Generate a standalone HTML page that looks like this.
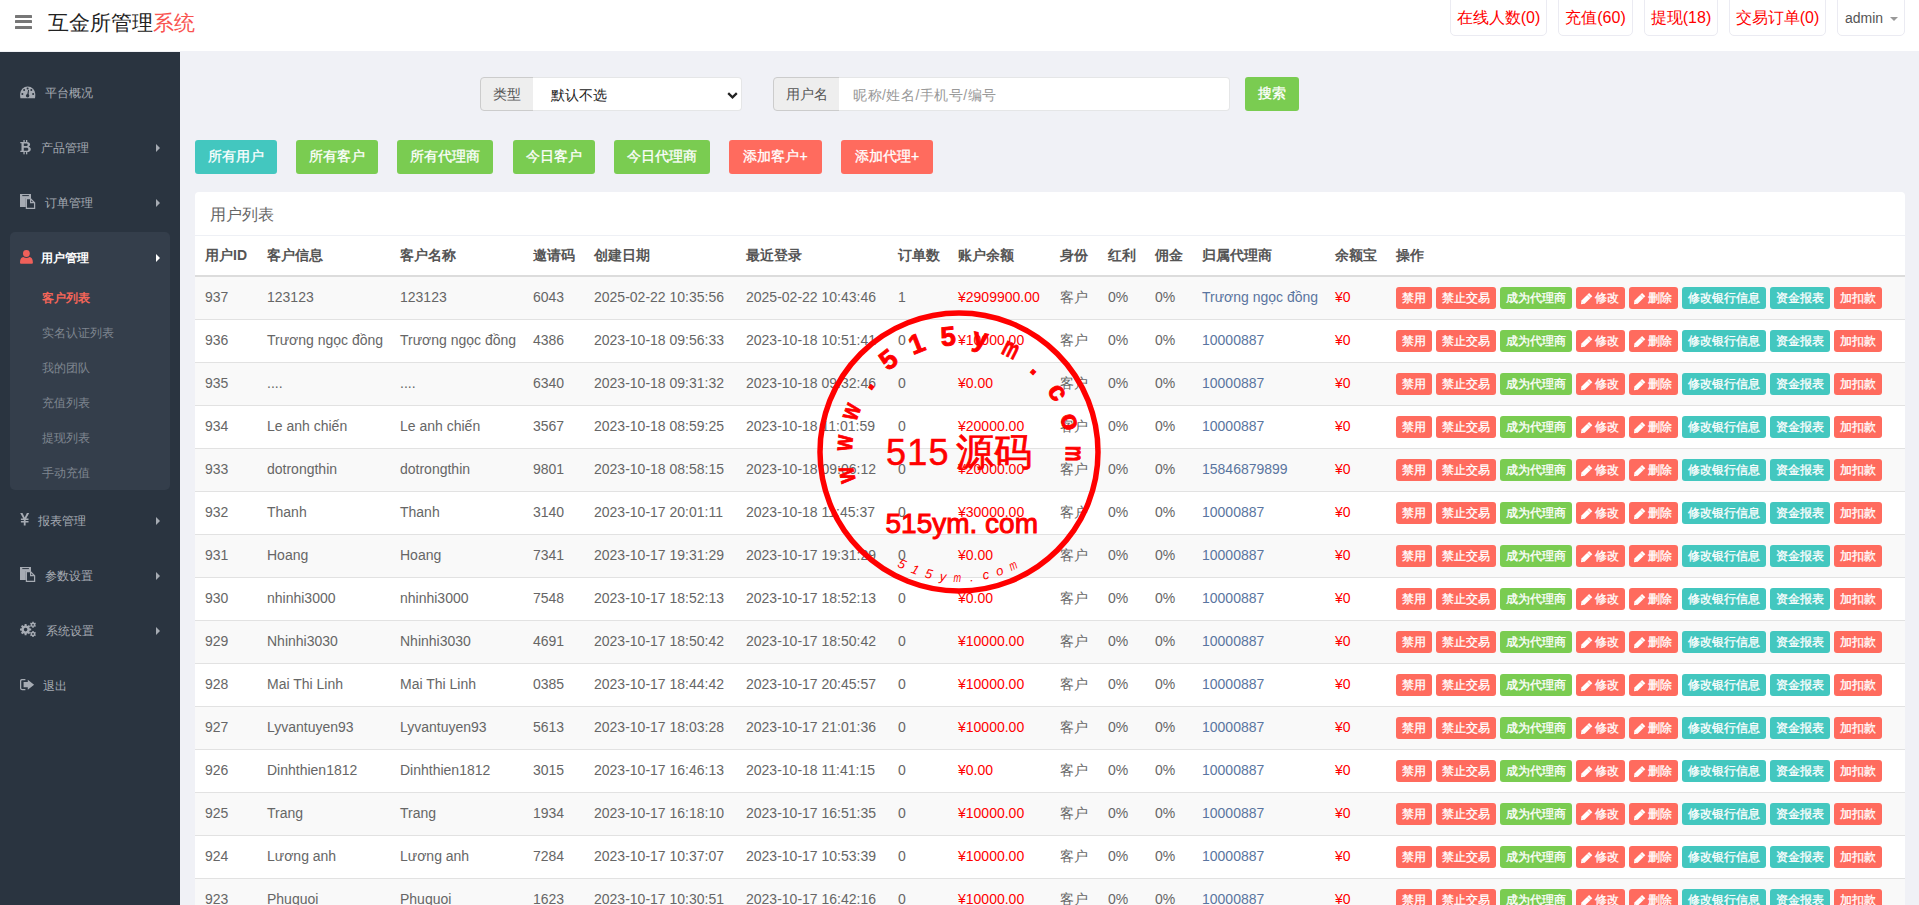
<!DOCTYPE html><html><head><meta charset="utf-8"><style>*{box-sizing:border-box;margin:0;padding:0}
html,body{width:1919px;height:905px;overflow:hidden;background:#f0f1f6;font-family:"Liberation Sans",sans-serif;font-size:14px;color:#666}
#hdr{position:absolute;left:0;top:0;width:1919px;height:51px;background:#fff}
.hb{position:absolute;left:15px;top:0;width:17px;height:40px}
.hb i{position:absolute;left:0;width:17px;height:2.7px;background:#777;border-radius:0.6px}
.hb i:nth-child(1){top:15.1px}.hb i:nth-child(2){top:20.2px}.hb i:nth-child(3){top:26.1px}
.logo{position:absolute;left:48px;top:9px;font-size:21px;line-height:28px;color:#222;white-space:nowrap}
.logo span{color:#f95350}
.hi{position:absolute;top:-5px;height:41px;border:1px solid #ebebf2;border-radius:5px;background:#fff;color:#ff0000;font-size:16px;line-height:44px;text-align:center;white-space:nowrap}
.hi.adm{color:#555;font-size:14px;text-align:left;padding-left:7px}
.caret{position:absolute;left:52px;top:21px;width:0;height:0;border-left:4.5px solid transparent;border-right:4.5px solid transparent;border-top:4.5px solid #999}
#content{position:absolute;left:180px;top:51px;width:1739px;height:854px;background:#f0f1f6}
#side{position:absolute;left:0;top:52px;width:180px;height:853px;background:#2a3440}
.mi{position:absolute;left:0;width:180px;height:20px;line-height:20px;font-size:12px;color:#a6abb3;white-space:nowrap}
.mi .ic{position:absolute;top:2px}
.mi .tx{position:absolute;top:0}
.mi .ar{position:absolute;left:156px;top:6px;width:0;height:0;border-top:4px solid transparent;border-bottom:4px solid transparent;border-left:4px solid #a6abb3}
#sub{position:absolute;left:10px;top:180px;width:160px;height:258px;background:#343e4b;border-radius:5px}
.si{position:absolute;left:42px;font-size:12px;line-height:20px;color:#7f8690;white-space:nowrap}
.lab{position:absolute;top:77px;height:34px;background:#eee;border:1px solid #ccc;border-radius:4px 0 0 4px;color:#555;text-align:center;line-height:32px;font-size:14px}
.sel{position:absolute;top:77px;height:34px;background:#fff;border:1px solid #e5e6e7;border-left:none;border-radius:0 4px 4px 0;color:#222;line-height:34px;padding-left:18px;font-size:14px}
.chev{position:absolute;right:3px;top:13.5px}
.inp{position:absolute;top:77px;height:34px;background:#fff;border:1px solid #e5e6e7;border-left:none;border-radius:0 4px 4px 0;color:#999;line-height:34px;padding-left:14px;letter-spacing:0.5px;font-size:14px}
.btn{position:absolute;border-radius:3px;color:#fff;text-align:center;line-height:33px;font-size:14px;white-space:nowrap;-webkit-text-stroke:0.3px #fff}
.g{background:#7acc51}
.t{background:#43c7bf}
.r{background:#ff6b5e}
#panel{position:absolute;left:195px;top:192px;width:1710px;height:720px;background:#fff;border-radius:4px}
.ptitle{position:absolute;left:15px;top:11.5px;font-size:16px;line-height:22px;color:#666}
#panel:after{content:"";position:absolute;left:0;top:43px;width:100%;height:1px;background:#eef0f5}
#tbl{position:absolute;left:195px;top:235px;width:1710px;height:700px}
.thead{position:absolute;left:0;top:1px;width:100%;height:41px;border-bottom:2px solid #dcdcdc}
.th{position:absolute;top:9px;font-weight:bold;color:#555;font-size:14px;line-height:20px;white-space:nowrap}
.tr{position:absolute;left:0;width:100%;height:43px;border-bottom:1px solid #e2e2e2;background:#fff}
.tr.odd{background:#f9f9f9}
.td{position:absolute;top:10px;line-height:20px;font-size:14px;color:#666;white-space:nowrap}
.td.red{color:#ff0000}
.td.blue{color:#5a75a0}
.ops{position:absolute;top:10px;height:22px;white-space:nowrap;font-size:0}
.b{display:inline-block;height:22px;line-height:22px;font-size:12px;-webkit-text-stroke:0.3px #fff;color:#fff;border-radius:3px;text-align:center;margin-right:4px;vertical-align:top}
.b.pb{position:relative;text-align:left;padding-left:19px}
.pen{position:absolute;left:5px;top:6px}
#stamp{position:absolute;left:809px;top:302px}
</style></head><body>
<div id="hdr">
<div class="hb"><i></i><i></i><i></i></div>
<div class="logo">互金所管理<span>系统</span></div>
<div class="hi" style="left:1450px;width:97px">在线人数(0)</div>
<div class="hi" style="left:1558px;width:75px">充值(60)</div>
<div class="hi" style="left:1644px;width:74px">提现(18)</div>
<div class="hi" style="left:1729px;width:97px">交易订单(0)</div>
<div class="hi adm" style="left:1837px;width:68px">admin<b class="caret"></b></div>
</div>
<div id="content"></div>
<div id="side">
<div id="sub"></div>
<svg style="position:absolute;left:19.8px;top:33.8px" width="16" height="13" viewBox="0 0 16 13"><path d="M0.1 8A7.6 7.6 0 0 1 15.3 8C15.3 9.5 15.2 11 15 12.2H0.4C0.2 11 0.1 9.5 0.1 8Z" fill="#a6abb3"/><g fill="#2a3440"><circle cx="2.4" cy="8" r="1"/><circle cx="4.1" cy="4.1" r="1"/><circle cx="7.6" cy="2.4" r="1"/><circle cx="11.3" cy="4.1" r="1"/><circle cx="13.1" cy="8" r="1"/><circle cx="7.6" cy="9.8" r="1.7"/><path d="M7 9.5L8.1 3.8 9 3.9 8.5 9.8Z"/></g></svg><svg style="position:absolute;left:20px;top:88px" width="12" height="15" viewBox="0 0 12 15"><path fill-rule="evenodd" d="M0.3 2h6.4c2.2 0 3.4 1 3.4 2.6 0 1-.6 1.8-1.5 2.1 1.3.3 2.2 1.2 2.2 2.5 0 1.9-1.4 2.8-3.7 2.8H0.3v-1.2h1.2V3.2H0.3z M3.8 3.6v2.5h2.4c.9 0 1.5-.5 1.5-1.25S7.1 3.6 6.2 3.6z M3.8 7.7v3h2.8c1 0 1.7-.5 1.7-1.5S7.6 7.7 6.6 7.7z" fill="#a6abb3"/><rect x="3.4" y="0" width="1.3" height="2.2" fill="#a6abb3"/><rect x="6" y="0" width="1.3" height="2.2" fill="#a6abb3"/><rect x="3.4" y="12" width="1.3" height="2.3" fill="#a6abb3"/><rect x="6" y="12" width="1.3" height="2.3" fill="#a6abb3"/></svg><svg style="position:absolute;left:20px;top:142px" width="16" height="16" viewBox="0 0 16 16"><path d="M0 0h11v13H0z" fill="#a6abb3"/><path d="M2.3 1.6h6.6" stroke="#2a3440" stroke-width="1"/><path d="M5.8 4h4.8l4.6 4.6V15H5.8z" fill="#2a3440"/><path d="M6.4 4.6h4l4.2 4.2v5.6H6.4z" fill="none" stroke="#a6abb3" stroke-width="1.25"/><path d="M10.6 4.8v3.8h3.8" fill="none" stroke="#a6abb3" stroke-width="1.2"/></svg><svg style="position:absolute;left:20px;top:197.5px" width="13" height="14" viewBox="0 0 13 14"><circle cx="6.4" cy="3.5" r="3.4" fill="#f0605a"/><path d="M0 12.4c0-3.2 1.4-5 3.3-5.3 1.9 1.3 4.3 1.3 6.3 0 1.9.3 3.3 2.1 3.3 5.3 0 .9-.5 1.4-1.3 1.4H1.3C.5 13.8 0 13.3 0 12.4z" fill="#f0605a"/></svg><svg style="position:absolute;left:20px;top:461px" width="10" height="13" viewBox="0 0 10 13"><path d="M0.2 0h2.3L4.7 4.6 6.9 0h2.3L6.2 5.6h2.3v1.3H5.6v1.2h2.9v1.3H5.6V12.5H3.8V9.4H0.9V8.1h2.9V6.9H0.9V5.6h2.3z" fill="#a6abb3"/></svg><svg style="position:absolute;left:20px;top:515px" width="16" height="16" viewBox="0 0 16 16"><path d="M0 0h11v13H0z" fill="#a6abb3"/><path d="M2.3 1.6h6.6" stroke="#2a3440" stroke-width="1"/><path d="M5.8 4h4.8l4.6 4.6V15H5.8z" fill="#2a3440"/><path d="M6.4 4.6h4l4.2 4.2v5.6H6.4z" fill="none" stroke="#a6abb3" stroke-width="1.25"/><path d="M10.6 4.8v3.8h3.8" fill="none" stroke="#a6abb3" stroke-width="1.2"/></svg><svg style="position:absolute;left:20px;top:568px" width="17" height="18" viewBox="0 0 17 18"><path fill-rule="evenodd" d="M4.58 5.42 L4.60 3.99 L6.60 3.99 L6.62 5.42 L7.83 5.92 L8.86 4.92 L10.28 6.34 L9.28 7.37 L9.78 8.58 L11.21 8.60 L11.21 10.60 L9.78 10.62 L9.28 11.83 L10.28 12.86 L8.86 14.28 L7.83 13.28 L6.62 13.78 L6.60 15.21 L4.60 15.21 L4.58 13.78 L3.37 13.28 L2.34 14.28 L0.92 12.86 L1.92 11.83 L1.42 10.62 L-0.01 10.60 L-0.01 8.60 L1.42 8.58 L1.92 7.37 L0.92 6.34 L2.34 4.92 L3.37 5.92Z M3.80 9.60 a1.8 1.8 0 1 0 3.60 0 a1.8 1.8 0 1 0 -3.60 0Z M12.25 2.73 L12.20 1.81 L13.80 1.81 L13.75 2.73 L14.42 3.12 L15.19 2.61 L15.99 4.00 L15.17 4.41 L15.17 5.19 L15.99 5.60 L15.19 6.99 L14.42 6.48 L13.75 6.87 L13.80 7.79 L12.20 7.79 L12.25 6.87 L11.58 6.48 L10.81 6.99 L10.01 5.60 L10.83 5.19 L10.83 4.41 L10.01 4.00 L10.81 2.61 L11.58 3.12Z M12.10 4.80 a0.9 0.9 0 1 0 1.80 0 a0.9 0.9 0 1 0 -1.80 0Z M12.25 11.93 L12.20 11.01 L13.80 11.01 L13.75 11.93 L14.42 12.32 L15.19 11.81 L15.99 13.20 L15.17 13.61 L15.17 14.39 L15.99 14.80 L15.19 16.19 L14.42 15.68 L13.75 16.07 L13.80 16.99 L12.20 16.99 L12.25 16.07 L11.58 15.68 L10.81 16.19 L10.01 14.80 L10.83 14.39 L10.83 13.61 L10.01 13.20 L10.81 11.81 L11.58 12.32Z M12.10 14.00 a0.9 0.9 0 1 0 1.80 0 a0.9 0.9 0 1 0 -1.80 0Z" fill="#a6abb3"/></svg><svg style="position:absolute;left:19.6px;top:626.6px" width="15" height="12" viewBox="0 0 15 12"><path d="M5.4 0.6H2.2C1.2 0.6 0.6 1.2 0.6 2.2v6.8c0 1 .6 1.6 1.6 1.6h3.2" fill="none" stroke="#a6abb3" stroke-width="1.3"/><path d="M3.6 3.1h4.2V0.7l6.3 5-6.3 5V8.3H3.6z" fill="#a6abb3"/></svg>
<div class="mi" style="top:30.700000000000003px"><span class="tx" style="left:44.6px">平台概况</span></div>
<div class="mi" style="top:85.5px"><span class="tx" style="left:40.7px">产品管理</span><i class="ar"></i></div>
<div class="mi" style="top:140.5px"><span class="tx" style="left:44.6px">订单管理</span><i class="ar"></i></div>
<div class="mi" style="top:195.6px;color:#fff;font-weight:bold"><span class="tx" style="left:41.2px">用户管理</span><i class="ar" style="border-left-color:#fff"></i></div>
<div class="si" style="top:235.5px;color:#f46558;font-weight:bold">客户列表</div>
<div class="si" style="top:270.5px">实名认证列表</div>
<div class="si" style="top:305.5px">我的团队</div>
<div class="si" style="top:340.5px">充值列表</div>
<div class="si" style="top:375.5px">提现列表</div>
<div class="si" style="top:410.5px">手动充值</div>
<div class="mi" style="top:458.5px"><span class="tx" style="left:38.1px">报表管理</span><i class="ar"></i></div>
<div class="mi" style="top:513.6px"><span class="tx" style="left:44.6px">参数设置</span><i class="ar"></i></div>
<div class="mi" style="top:569px"><span class="tx" style="left:46.3px">系统设置</span><i class="ar"></i></div>
<div class="mi" style="top:624px"><span class="tx" style="left:43.3px">退出</span></div>
</div>
<div class="lab" style="left:480px;width:54px">类型</div>
<div class="sel" style="left:533px;width:209px">默认不选<svg class="chev" width="11" height="7" viewBox="0 0 11 7"><path d="M1.2 1.2L5.5 5.3 9.8 1.2" stroke="#222" stroke-width="2.3" fill="none"/></svg></div>
<div class="lab" style="left:773px;width:67px">用户名</div>
<div class="inp" style="left:839px;width:391px">昵称/姓名/手机号/编号</div>
<div class="btn g" style="left:1245px;top:77px;width:54px;height:34px">搜索</div>

<div class="btn t" style="left:195px;top:140px;width:82px;height:34px">所有用户</div>
<div class="btn g" style="left:296px;top:140px;width:82px;height:34px">所有客户</div>
<div class="btn g" style="left:397px;top:140px;width:96px;height:34px">所有代理商</div>
<div class="btn g" style="left:513px;top:140px;width:82px;height:34px">今日客户</div>
<div class="btn g" style="left:614px;top:140px;width:96px;height:34px">今日代理商</div>
<div class="btn r" style="left:729px;top:140px;width:93px;height:34px">添加客户+</div>
<div class="btn r" style="left:841px;top:140px;width:92px;height:34px">添加代理+</div>
<div id="panel"><div class="ptitle">用户列表</div></div>
<div id="tbl">
<div class="thead">
<span class="th" style="left:10px">用户ID</span>
<span class="th" style="left:72px">客户信息</span>
<span class="th" style="left:205px">客户名称</span>
<span class="th" style="left:338px">邀请码</span>
<span class="th" style="left:399px">创建日期</span>
<span class="th" style="left:551px">最近登录</span>
<span class="th" style="left:703px">订单数</span>
<span class="th" style="left:763px">账户余额</span>
<span class="th" style="left:865px">身份</span>
<span class="th" style="left:913px">红利</span>
<span class="th" style="left:960px">佣金</span>
<span class="th" style="left:1007px">归属代理商</span>
<span class="th" style="left:1140px">余额宝</span>
<span class="th" style="left:1201px">操作</span>
</div>
<div class="tr odd" style="top:42px">
<span class="td" style="left:10px">937</span>
<span class="td" style="left:72px">123123</span>
<span class="td" style="left:205px">123123</span>
<span class="td" style="left:338px">6043</span>
<span class="td" style="left:399px">2025-02-22 10:35:56</span>
<span class="td" style="left:551px">2025-02-22 10:43:46</span>
<span class="td" style="left:703px">1</span>
<span class="td red" style="left:763px">¥2909900.00</span>
<span class="td" style="left:865px">客户</span>
<span class="td" style="left:913px">0%</span>
<span class="td" style="left:960px">0%</span>
<span class="td blue" style="left:1007px">Trương ngọc đồng</span>
<span class="td red" style="left:1140px">¥0</span>
<span class="ops" style="left:1201px"><span class="b r" style="width:36px">禁用</span><span class="b r" style="width:60px">禁止交易</span><span class="b g" style="width:72px">成为代理商</span><span class="b r pb" style="width:49px"><svg class="pen" width="12" height="12" viewBox="0 0 12 12"><path d="M0 11.3L0.45 7.6 8.1 0 11.3 3.2 3.7 10.85Z" fill="#fff"/><path d="M6.3 1.75L9.55 5" stroke="#ff6b5e" stroke-width="0.45"/><path d="M0.35 8.4L2.9 10.95" stroke="#ffd0c8" stroke-width="0.5"/></svg>修改</span><span class="b r pb" style="width:49px"><svg class="pen" width="12" height="12" viewBox="0 0 12 12"><path d="M0 11.3L0.45 7.6 8.1 0 11.3 3.2 3.7 10.85Z" fill="#fff"/><path d="M6.3 1.75L9.55 5" stroke="#ff6b5e" stroke-width="0.45"/><path d="M0.35 8.4L2.9 10.95" stroke="#ffd0c8" stroke-width="0.5"/></svg>删除</span><span class="b t" style="width:84px">修改银行信息</span><span class="b t" style="width:60px">资金报表</span><span class="b r" style="width:48px">加扣款</span></span>
</div>
<div class="tr" style="top:85px">
<span class="td" style="left:10px">936</span>
<span class="td" style="left:72px">Trương ngọc đồng</span>
<span class="td" style="left:205px">Trương ngọc đồng</span>
<span class="td" style="left:338px">4386</span>
<span class="td" style="left:399px">2023-10-18 09:56:33</span>
<span class="td" style="left:551px">2023-10-18 10:51:41</span>
<span class="td" style="left:703px">0</span>
<span class="td red" style="left:763px">¥10000.00</span>
<span class="td" style="left:865px">客户</span>
<span class="td" style="left:913px">0%</span>
<span class="td" style="left:960px">0%</span>
<span class="td blue" style="left:1007px">10000887</span>
<span class="td red" style="left:1140px">¥0</span>
<span class="ops" style="left:1201px"><span class="b r" style="width:36px">禁用</span><span class="b r" style="width:60px">禁止交易</span><span class="b g" style="width:72px">成为代理商</span><span class="b r pb" style="width:49px"><svg class="pen" width="12" height="12" viewBox="0 0 12 12"><path d="M0 11.3L0.45 7.6 8.1 0 11.3 3.2 3.7 10.85Z" fill="#fff"/><path d="M6.3 1.75L9.55 5" stroke="#ff6b5e" stroke-width="0.45"/><path d="M0.35 8.4L2.9 10.95" stroke="#ffd0c8" stroke-width="0.5"/></svg>修改</span><span class="b r pb" style="width:49px"><svg class="pen" width="12" height="12" viewBox="0 0 12 12"><path d="M0 11.3L0.45 7.6 8.1 0 11.3 3.2 3.7 10.85Z" fill="#fff"/><path d="M6.3 1.75L9.55 5" stroke="#ff6b5e" stroke-width="0.45"/><path d="M0.35 8.4L2.9 10.95" stroke="#ffd0c8" stroke-width="0.5"/></svg>删除</span><span class="b t" style="width:84px">修改银行信息</span><span class="b t" style="width:60px">资金报表</span><span class="b r" style="width:48px">加扣款</span></span>
</div>
<div class="tr odd" style="top:128px">
<span class="td" style="left:10px">935</span>
<span class="td" style="left:72px">....</span>
<span class="td" style="left:205px">....</span>
<span class="td" style="left:338px">6340</span>
<span class="td" style="left:399px">2023-10-18 09:31:32</span>
<span class="td" style="left:551px">2023-10-18 09:32:46</span>
<span class="td" style="left:703px">0</span>
<span class="td red" style="left:763px">¥0.00</span>
<span class="td" style="left:865px">客户</span>
<span class="td" style="left:913px">0%</span>
<span class="td" style="left:960px">0%</span>
<span class="td blue" style="left:1007px">10000887</span>
<span class="td red" style="left:1140px">¥0</span>
<span class="ops" style="left:1201px"><span class="b r" style="width:36px">禁用</span><span class="b r" style="width:60px">禁止交易</span><span class="b g" style="width:72px">成为代理商</span><span class="b r pb" style="width:49px"><svg class="pen" width="12" height="12" viewBox="0 0 12 12"><path d="M0 11.3L0.45 7.6 8.1 0 11.3 3.2 3.7 10.85Z" fill="#fff"/><path d="M6.3 1.75L9.55 5" stroke="#ff6b5e" stroke-width="0.45"/><path d="M0.35 8.4L2.9 10.95" stroke="#ffd0c8" stroke-width="0.5"/></svg>修改</span><span class="b r pb" style="width:49px"><svg class="pen" width="12" height="12" viewBox="0 0 12 12"><path d="M0 11.3L0.45 7.6 8.1 0 11.3 3.2 3.7 10.85Z" fill="#fff"/><path d="M6.3 1.75L9.55 5" stroke="#ff6b5e" stroke-width="0.45"/><path d="M0.35 8.4L2.9 10.95" stroke="#ffd0c8" stroke-width="0.5"/></svg>删除</span><span class="b t" style="width:84px">修改银行信息</span><span class="b t" style="width:60px">资金报表</span><span class="b r" style="width:48px">加扣款</span></span>
</div>
<div class="tr" style="top:171px">
<span class="td" style="left:10px">934</span>
<span class="td" style="left:72px">Le anh chiến</span>
<span class="td" style="left:205px">Le anh chiến</span>
<span class="td" style="left:338px">3567</span>
<span class="td" style="left:399px">2023-10-18 08:59:25</span>
<span class="td" style="left:551px">2023-10-18 11:01:59</span>
<span class="td" style="left:703px">0</span>
<span class="td red" style="left:763px">¥20000.00</span>
<span class="td" style="left:865px">客户</span>
<span class="td" style="left:913px">0%</span>
<span class="td" style="left:960px">0%</span>
<span class="td blue" style="left:1007px">10000887</span>
<span class="td red" style="left:1140px">¥0</span>
<span class="ops" style="left:1201px"><span class="b r" style="width:36px">禁用</span><span class="b r" style="width:60px">禁止交易</span><span class="b g" style="width:72px">成为代理商</span><span class="b r pb" style="width:49px"><svg class="pen" width="12" height="12" viewBox="0 0 12 12"><path d="M0 11.3L0.45 7.6 8.1 0 11.3 3.2 3.7 10.85Z" fill="#fff"/><path d="M6.3 1.75L9.55 5" stroke="#ff6b5e" stroke-width="0.45"/><path d="M0.35 8.4L2.9 10.95" stroke="#ffd0c8" stroke-width="0.5"/></svg>修改</span><span class="b r pb" style="width:49px"><svg class="pen" width="12" height="12" viewBox="0 0 12 12"><path d="M0 11.3L0.45 7.6 8.1 0 11.3 3.2 3.7 10.85Z" fill="#fff"/><path d="M6.3 1.75L9.55 5" stroke="#ff6b5e" stroke-width="0.45"/><path d="M0.35 8.4L2.9 10.95" stroke="#ffd0c8" stroke-width="0.5"/></svg>删除</span><span class="b t" style="width:84px">修改银行信息</span><span class="b t" style="width:60px">资金报表</span><span class="b r" style="width:48px">加扣款</span></span>
</div>
<div class="tr odd" style="top:214px">
<span class="td" style="left:10px">933</span>
<span class="td" style="left:72px">dotrongthin</span>
<span class="td" style="left:205px">dotrongthin</span>
<span class="td" style="left:338px">9801</span>
<span class="td" style="left:399px">2023-10-18 08:58:15</span>
<span class="td" style="left:551px">2023-10-18 09:06:12</span>
<span class="td" style="left:703px">0</span>
<span class="td red" style="left:763px">¥20000.00</span>
<span class="td" style="left:865px">客户</span>
<span class="td" style="left:913px">0%</span>
<span class="td" style="left:960px">0%</span>
<span class="td blue" style="left:1007px">15846879899</span>
<span class="td red" style="left:1140px">¥0</span>
<span class="ops" style="left:1201px"><span class="b r" style="width:36px">禁用</span><span class="b r" style="width:60px">禁止交易</span><span class="b g" style="width:72px">成为代理商</span><span class="b r pb" style="width:49px"><svg class="pen" width="12" height="12" viewBox="0 0 12 12"><path d="M0 11.3L0.45 7.6 8.1 0 11.3 3.2 3.7 10.85Z" fill="#fff"/><path d="M6.3 1.75L9.55 5" stroke="#ff6b5e" stroke-width="0.45"/><path d="M0.35 8.4L2.9 10.95" stroke="#ffd0c8" stroke-width="0.5"/></svg>修改</span><span class="b r pb" style="width:49px"><svg class="pen" width="12" height="12" viewBox="0 0 12 12"><path d="M0 11.3L0.45 7.6 8.1 0 11.3 3.2 3.7 10.85Z" fill="#fff"/><path d="M6.3 1.75L9.55 5" stroke="#ff6b5e" stroke-width="0.45"/><path d="M0.35 8.4L2.9 10.95" stroke="#ffd0c8" stroke-width="0.5"/></svg>删除</span><span class="b t" style="width:84px">修改银行信息</span><span class="b t" style="width:60px">资金报表</span><span class="b r" style="width:48px">加扣款</span></span>
</div>
<div class="tr" style="top:257px">
<span class="td" style="left:10px">932</span>
<span class="td" style="left:72px">Thanh</span>
<span class="td" style="left:205px">Thanh</span>
<span class="td" style="left:338px">3140</span>
<span class="td" style="left:399px">2023-10-17 20:01:11</span>
<span class="td" style="left:551px">2023-10-18 11:45:37</span>
<span class="td" style="left:703px">0</span>
<span class="td red" style="left:763px">¥30000.00</span>
<span class="td" style="left:865px">客户</span>
<span class="td" style="left:913px">0%</span>
<span class="td" style="left:960px">0%</span>
<span class="td blue" style="left:1007px">10000887</span>
<span class="td red" style="left:1140px">¥0</span>
<span class="ops" style="left:1201px"><span class="b r" style="width:36px">禁用</span><span class="b r" style="width:60px">禁止交易</span><span class="b g" style="width:72px">成为代理商</span><span class="b r pb" style="width:49px"><svg class="pen" width="12" height="12" viewBox="0 0 12 12"><path d="M0 11.3L0.45 7.6 8.1 0 11.3 3.2 3.7 10.85Z" fill="#fff"/><path d="M6.3 1.75L9.55 5" stroke="#ff6b5e" stroke-width="0.45"/><path d="M0.35 8.4L2.9 10.95" stroke="#ffd0c8" stroke-width="0.5"/></svg>修改</span><span class="b r pb" style="width:49px"><svg class="pen" width="12" height="12" viewBox="0 0 12 12"><path d="M0 11.3L0.45 7.6 8.1 0 11.3 3.2 3.7 10.85Z" fill="#fff"/><path d="M6.3 1.75L9.55 5" stroke="#ff6b5e" stroke-width="0.45"/><path d="M0.35 8.4L2.9 10.95" stroke="#ffd0c8" stroke-width="0.5"/></svg>删除</span><span class="b t" style="width:84px">修改银行信息</span><span class="b t" style="width:60px">资金报表</span><span class="b r" style="width:48px">加扣款</span></span>
</div>
<div class="tr odd" style="top:300px">
<span class="td" style="left:10px">931</span>
<span class="td" style="left:72px">Hoang</span>
<span class="td" style="left:205px">Hoang</span>
<span class="td" style="left:338px">7341</span>
<span class="td" style="left:399px">2023-10-17 19:31:29</span>
<span class="td" style="left:551px">2023-10-17 19:31:29</span>
<span class="td" style="left:703px">0</span>
<span class="td red" style="left:763px">¥0.00</span>
<span class="td" style="left:865px">客户</span>
<span class="td" style="left:913px">0%</span>
<span class="td" style="left:960px">0%</span>
<span class="td blue" style="left:1007px">10000887</span>
<span class="td red" style="left:1140px">¥0</span>
<span class="ops" style="left:1201px"><span class="b r" style="width:36px">禁用</span><span class="b r" style="width:60px">禁止交易</span><span class="b g" style="width:72px">成为代理商</span><span class="b r pb" style="width:49px"><svg class="pen" width="12" height="12" viewBox="0 0 12 12"><path d="M0 11.3L0.45 7.6 8.1 0 11.3 3.2 3.7 10.85Z" fill="#fff"/><path d="M6.3 1.75L9.55 5" stroke="#ff6b5e" stroke-width="0.45"/><path d="M0.35 8.4L2.9 10.95" stroke="#ffd0c8" stroke-width="0.5"/></svg>修改</span><span class="b r pb" style="width:49px"><svg class="pen" width="12" height="12" viewBox="0 0 12 12"><path d="M0 11.3L0.45 7.6 8.1 0 11.3 3.2 3.7 10.85Z" fill="#fff"/><path d="M6.3 1.75L9.55 5" stroke="#ff6b5e" stroke-width="0.45"/><path d="M0.35 8.4L2.9 10.95" stroke="#ffd0c8" stroke-width="0.5"/></svg>删除</span><span class="b t" style="width:84px">修改银行信息</span><span class="b t" style="width:60px">资金报表</span><span class="b r" style="width:48px">加扣款</span></span>
</div>
<div class="tr" style="top:343px">
<span class="td" style="left:10px">930</span>
<span class="td" style="left:72px">nhinhi3000</span>
<span class="td" style="left:205px">nhinhi3000</span>
<span class="td" style="left:338px">7548</span>
<span class="td" style="left:399px">2023-10-17 18:52:13</span>
<span class="td" style="left:551px">2023-10-17 18:52:13</span>
<span class="td" style="left:703px">0</span>
<span class="td red" style="left:763px">¥0.00</span>
<span class="td" style="left:865px">客户</span>
<span class="td" style="left:913px">0%</span>
<span class="td" style="left:960px">0%</span>
<span class="td blue" style="left:1007px">10000887</span>
<span class="td red" style="left:1140px">¥0</span>
<span class="ops" style="left:1201px"><span class="b r" style="width:36px">禁用</span><span class="b r" style="width:60px">禁止交易</span><span class="b g" style="width:72px">成为代理商</span><span class="b r pb" style="width:49px"><svg class="pen" width="12" height="12" viewBox="0 0 12 12"><path d="M0 11.3L0.45 7.6 8.1 0 11.3 3.2 3.7 10.85Z" fill="#fff"/><path d="M6.3 1.75L9.55 5" stroke="#ff6b5e" stroke-width="0.45"/><path d="M0.35 8.4L2.9 10.95" stroke="#ffd0c8" stroke-width="0.5"/></svg>修改</span><span class="b r pb" style="width:49px"><svg class="pen" width="12" height="12" viewBox="0 0 12 12"><path d="M0 11.3L0.45 7.6 8.1 0 11.3 3.2 3.7 10.85Z" fill="#fff"/><path d="M6.3 1.75L9.55 5" stroke="#ff6b5e" stroke-width="0.45"/><path d="M0.35 8.4L2.9 10.95" stroke="#ffd0c8" stroke-width="0.5"/></svg>删除</span><span class="b t" style="width:84px">修改银行信息</span><span class="b t" style="width:60px">资金报表</span><span class="b r" style="width:48px">加扣款</span></span>
</div>
<div class="tr odd" style="top:386px">
<span class="td" style="left:10px">929</span>
<span class="td" style="left:72px">Nhinhi3030</span>
<span class="td" style="left:205px">Nhinhi3030</span>
<span class="td" style="left:338px">4691</span>
<span class="td" style="left:399px">2023-10-17 18:50:42</span>
<span class="td" style="left:551px">2023-10-17 18:50:42</span>
<span class="td" style="left:703px">0</span>
<span class="td red" style="left:763px">¥10000.00</span>
<span class="td" style="left:865px">客户</span>
<span class="td" style="left:913px">0%</span>
<span class="td" style="left:960px">0%</span>
<span class="td blue" style="left:1007px">10000887</span>
<span class="td red" style="left:1140px">¥0</span>
<span class="ops" style="left:1201px"><span class="b r" style="width:36px">禁用</span><span class="b r" style="width:60px">禁止交易</span><span class="b g" style="width:72px">成为代理商</span><span class="b r pb" style="width:49px"><svg class="pen" width="12" height="12" viewBox="0 0 12 12"><path d="M0 11.3L0.45 7.6 8.1 0 11.3 3.2 3.7 10.85Z" fill="#fff"/><path d="M6.3 1.75L9.55 5" stroke="#ff6b5e" stroke-width="0.45"/><path d="M0.35 8.4L2.9 10.95" stroke="#ffd0c8" stroke-width="0.5"/></svg>修改</span><span class="b r pb" style="width:49px"><svg class="pen" width="12" height="12" viewBox="0 0 12 12"><path d="M0 11.3L0.45 7.6 8.1 0 11.3 3.2 3.7 10.85Z" fill="#fff"/><path d="M6.3 1.75L9.55 5" stroke="#ff6b5e" stroke-width="0.45"/><path d="M0.35 8.4L2.9 10.95" stroke="#ffd0c8" stroke-width="0.5"/></svg>删除</span><span class="b t" style="width:84px">修改银行信息</span><span class="b t" style="width:60px">资金报表</span><span class="b r" style="width:48px">加扣款</span></span>
</div>
<div class="tr" style="top:429px">
<span class="td" style="left:10px">928</span>
<span class="td" style="left:72px">Mai Thi Linh</span>
<span class="td" style="left:205px">Mai Thi Linh</span>
<span class="td" style="left:338px">0385</span>
<span class="td" style="left:399px">2023-10-17 18:44:42</span>
<span class="td" style="left:551px">2023-10-17 20:45:57</span>
<span class="td" style="left:703px">0</span>
<span class="td red" style="left:763px">¥10000.00</span>
<span class="td" style="left:865px">客户</span>
<span class="td" style="left:913px">0%</span>
<span class="td" style="left:960px">0%</span>
<span class="td blue" style="left:1007px">10000887</span>
<span class="td red" style="left:1140px">¥0</span>
<span class="ops" style="left:1201px"><span class="b r" style="width:36px">禁用</span><span class="b r" style="width:60px">禁止交易</span><span class="b g" style="width:72px">成为代理商</span><span class="b r pb" style="width:49px"><svg class="pen" width="12" height="12" viewBox="0 0 12 12"><path d="M0 11.3L0.45 7.6 8.1 0 11.3 3.2 3.7 10.85Z" fill="#fff"/><path d="M6.3 1.75L9.55 5" stroke="#ff6b5e" stroke-width="0.45"/><path d="M0.35 8.4L2.9 10.95" stroke="#ffd0c8" stroke-width="0.5"/></svg>修改</span><span class="b r pb" style="width:49px"><svg class="pen" width="12" height="12" viewBox="0 0 12 12"><path d="M0 11.3L0.45 7.6 8.1 0 11.3 3.2 3.7 10.85Z" fill="#fff"/><path d="M6.3 1.75L9.55 5" stroke="#ff6b5e" stroke-width="0.45"/><path d="M0.35 8.4L2.9 10.95" stroke="#ffd0c8" stroke-width="0.5"/></svg>删除</span><span class="b t" style="width:84px">修改银行信息</span><span class="b t" style="width:60px">资金报表</span><span class="b r" style="width:48px">加扣款</span></span>
</div>
<div class="tr odd" style="top:472px">
<span class="td" style="left:10px">927</span>
<span class="td" style="left:72px">Lyvantuyen93</span>
<span class="td" style="left:205px">Lyvantuyen93</span>
<span class="td" style="left:338px">5613</span>
<span class="td" style="left:399px">2023-10-17 18:03:28</span>
<span class="td" style="left:551px">2023-10-17 21:01:36</span>
<span class="td" style="left:703px">0</span>
<span class="td red" style="left:763px">¥10000.00</span>
<span class="td" style="left:865px">客户</span>
<span class="td" style="left:913px">0%</span>
<span class="td" style="left:960px">0%</span>
<span class="td blue" style="left:1007px">10000887</span>
<span class="td red" style="left:1140px">¥0</span>
<span class="ops" style="left:1201px"><span class="b r" style="width:36px">禁用</span><span class="b r" style="width:60px">禁止交易</span><span class="b g" style="width:72px">成为代理商</span><span class="b r pb" style="width:49px"><svg class="pen" width="12" height="12" viewBox="0 0 12 12"><path d="M0 11.3L0.45 7.6 8.1 0 11.3 3.2 3.7 10.85Z" fill="#fff"/><path d="M6.3 1.75L9.55 5" stroke="#ff6b5e" stroke-width="0.45"/><path d="M0.35 8.4L2.9 10.95" stroke="#ffd0c8" stroke-width="0.5"/></svg>修改</span><span class="b r pb" style="width:49px"><svg class="pen" width="12" height="12" viewBox="0 0 12 12"><path d="M0 11.3L0.45 7.6 8.1 0 11.3 3.2 3.7 10.85Z" fill="#fff"/><path d="M6.3 1.75L9.55 5" stroke="#ff6b5e" stroke-width="0.45"/><path d="M0.35 8.4L2.9 10.95" stroke="#ffd0c8" stroke-width="0.5"/></svg>删除</span><span class="b t" style="width:84px">修改银行信息</span><span class="b t" style="width:60px">资金报表</span><span class="b r" style="width:48px">加扣款</span></span>
</div>
<div class="tr" style="top:515px">
<span class="td" style="left:10px">926</span>
<span class="td" style="left:72px">Dinhthien1812</span>
<span class="td" style="left:205px">Dinhthien1812</span>
<span class="td" style="left:338px">3015</span>
<span class="td" style="left:399px">2023-10-17 16:46:13</span>
<span class="td" style="left:551px">2023-10-18 11:41:15</span>
<span class="td" style="left:703px">0</span>
<span class="td red" style="left:763px">¥0.00</span>
<span class="td" style="left:865px">客户</span>
<span class="td" style="left:913px">0%</span>
<span class="td" style="left:960px">0%</span>
<span class="td blue" style="left:1007px">10000887</span>
<span class="td red" style="left:1140px">¥0</span>
<span class="ops" style="left:1201px"><span class="b r" style="width:36px">禁用</span><span class="b r" style="width:60px">禁止交易</span><span class="b g" style="width:72px">成为代理商</span><span class="b r pb" style="width:49px"><svg class="pen" width="12" height="12" viewBox="0 0 12 12"><path d="M0 11.3L0.45 7.6 8.1 0 11.3 3.2 3.7 10.85Z" fill="#fff"/><path d="M6.3 1.75L9.55 5" stroke="#ff6b5e" stroke-width="0.45"/><path d="M0.35 8.4L2.9 10.95" stroke="#ffd0c8" stroke-width="0.5"/></svg>修改</span><span class="b r pb" style="width:49px"><svg class="pen" width="12" height="12" viewBox="0 0 12 12"><path d="M0 11.3L0.45 7.6 8.1 0 11.3 3.2 3.7 10.85Z" fill="#fff"/><path d="M6.3 1.75L9.55 5" stroke="#ff6b5e" stroke-width="0.45"/><path d="M0.35 8.4L2.9 10.95" stroke="#ffd0c8" stroke-width="0.5"/></svg>删除</span><span class="b t" style="width:84px">修改银行信息</span><span class="b t" style="width:60px">资金报表</span><span class="b r" style="width:48px">加扣款</span></span>
</div>
<div class="tr odd" style="top:558px">
<span class="td" style="left:10px">925</span>
<span class="td" style="left:72px">Trang</span>
<span class="td" style="left:205px">Trang</span>
<span class="td" style="left:338px">1934</span>
<span class="td" style="left:399px">2023-10-17 16:18:10</span>
<span class="td" style="left:551px">2023-10-17 16:51:35</span>
<span class="td" style="left:703px">0</span>
<span class="td red" style="left:763px">¥10000.00</span>
<span class="td" style="left:865px">客户</span>
<span class="td" style="left:913px">0%</span>
<span class="td" style="left:960px">0%</span>
<span class="td blue" style="left:1007px">10000887</span>
<span class="td red" style="left:1140px">¥0</span>
<span class="ops" style="left:1201px"><span class="b r" style="width:36px">禁用</span><span class="b r" style="width:60px">禁止交易</span><span class="b g" style="width:72px">成为代理商</span><span class="b r pb" style="width:49px"><svg class="pen" width="12" height="12" viewBox="0 0 12 12"><path d="M0 11.3L0.45 7.6 8.1 0 11.3 3.2 3.7 10.85Z" fill="#fff"/><path d="M6.3 1.75L9.55 5" stroke="#ff6b5e" stroke-width="0.45"/><path d="M0.35 8.4L2.9 10.95" stroke="#ffd0c8" stroke-width="0.5"/></svg>修改</span><span class="b r pb" style="width:49px"><svg class="pen" width="12" height="12" viewBox="0 0 12 12"><path d="M0 11.3L0.45 7.6 8.1 0 11.3 3.2 3.7 10.85Z" fill="#fff"/><path d="M6.3 1.75L9.55 5" stroke="#ff6b5e" stroke-width="0.45"/><path d="M0.35 8.4L2.9 10.95" stroke="#ffd0c8" stroke-width="0.5"/></svg>删除</span><span class="b t" style="width:84px">修改银行信息</span><span class="b t" style="width:60px">资金报表</span><span class="b r" style="width:48px">加扣款</span></span>
</div>
<div class="tr" style="top:601px">
<span class="td" style="left:10px">924</span>
<span class="td" style="left:72px">Lương anh</span>
<span class="td" style="left:205px">Lương anh</span>
<span class="td" style="left:338px">7284</span>
<span class="td" style="left:399px">2023-10-17 10:37:07</span>
<span class="td" style="left:551px">2023-10-17 10:53:39</span>
<span class="td" style="left:703px">0</span>
<span class="td red" style="left:763px">¥10000.00</span>
<span class="td" style="left:865px">客户</span>
<span class="td" style="left:913px">0%</span>
<span class="td" style="left:960px">0%</span>
<span class="td blue" style="left:1007px">10000887</span>
<span class="td red" style="left:1140px">¥0</span>
<span class="ops" style="left:1201px"><span class="b r" style="width:36px">禁用</span><span class="b r" style="width:60px">禁止交易</span><span class="b g" style="width:72px">成为代理商</span><span class="b r pb" style="width:49px"><svg class="pen" width="12" height="12" viewBox="0 0 12 12"><path d="M0 11.3L0.45 7.6 8.1 0 11.3 3.2 3.7 10.85Z" fill="#fff"/><path d="M6.3 1.75L9.55 5" stroke="#ff6b5e" stroke-width="0.45"/><path d="M0.35 8.4L2.9 10.95" stroke="#ffd0c8" stroke-width="0.5"/></svg>修改</span><span class="b r pb" style="width:49px"><svg class="pen" width="12" height="12" viewBox="0 0 12 12"><path d="M0 11.3L0.45 7.6 8.1 0 11.3 3.2 3.7 10.85Z" fill="#fff"/><path d="M6.3 1.75L9.55 5" stroke="#ff6b5e" stroke-width="0.45"/><path d="M0.35 8.4L2.9 10.95" stroke="#ffd0c8" stroke-width="0.5"/></svg>删除</span><span class="b t" style="width:84px">修改银行信息</span><span class="b t" style="width:60px">资金报表</span><span class="b r" style="width:48px">加扣款</span></span>
</div>
<div class="tr odd" style="top:644px">
<span class="td" style="left:10px">923</span>
<span class="td" style="left:72px">Phuquoi</span>
<span class="td" style="left:205px">Phuquoi</span>
<span class="td" style="left:338px">1623</span>
<span class="td" style="left:399px">2023-10-17 10:30:51</span>
<span class="td" style="left:551px">2023-10-17 16:42:16</span>
<span class="td" style="left:703px">0</span>
<span class="td red" style="left:763px">¥10000.00</span>
<span class="td" style="left:865px">客户</span>
<span class="td" style="left:913px">0%</span>
<span class="td" style="left:960px">0%</span>
<span class="td blue" style="left:1007px">10000887</span>
<span class="td red" style="left:1140px">¥0</span>
<span class="ops" style="left:1201px"><span class="b r" style="width:36px">禁用</span><span class="b r" style="width:60px">禁止交易</span><span class="b g" style="width:72px">成为代理商</span><span class="b r pb" style="width:49px"><svg class="pen" width="12" height="12" viewBox="0 0 12 12"><path d="M0 11.3L0.45 7.6 8.1 0 11.3 3.2 3.7 10.85Z" fill="#fff"/><path d="M6.3 1.75L9.55 5" stroke="#ff6b5e" stroke-width="0.45"/><path d="M0.35 8.4L2.9 10.95" stroke="#ffd0c8" stroke-width="0.5"/></svg>修改</span><span class="b r pb" style="width:49px"><svg class="pen" width="12" height="12" viewBox="0 0 12 12"><path d="M0 11.3L0.45 7.6 8.1 0 11.3 3.2 3.7 10.85Z" fill="#fff"/><path d="M6.3 1.75L9.55 5" stroke="#ff6b5e" stroke-width="0.45"/><path d="M0.35 8.4L2.9 10.95" stroke="#ffd0c8" stroke-width="0.5"/></svg>删除</span><span class="b t" style="width:84px">修改银行信息</span><span class="b t" style="width:60px">资金报表</span><span class="b r" style="width:48px">加扣款</span></span>
</div>
</div>
<svg id="stamp" width="300" height="300" viewBox="0 0 300 300">
<circle cx="150" cy="150" r="139" fill="none" stroke="#f00" stroke-width="5.5"/>
<text transform="rotate(-101.50 150 150) translate(150 43) scale(0.738 1)" x="0" y="0" text-anchor="middle" font-family="Liberation Sans" font-weight="bold" font-size="27" fill="#f00" stroke="#f00" stroke-width="0.9">w</text>
<text transform="rotate(-85.47 150 150) translate(150 43) scale(0.738 1)" x="0" y="0" text-anchor="middle" font-family="Liberation Sans" font-weight="bold" font-size="27" fill="#f00" stroke="#f00" stroke-width="0.9">w</text>
<text transform="rotate(-69.44 150 150) translate(150 43) scale(0.738 1)" x="0" y="0" text-anchor="middle" font-family="Liberation Sans" font-weight="bold" font-size="27" fill="#f00" stroke="#f00" stroke-width="0.9">w</text>
<text transform="rotate(-53.41 150 150) translate(150 43) scale(1.000 1)" x="0" y="0" text-anchor="middle" font-family="Liberation Sans" font-weight="bold" font-size="27" fill="#f00" stroke="#f00" stroke-width="0.9">.</text>
<text transform="rotate(-37.38 150 150) translate(150 43) scale(1.000 1)" x="0" y="0" text-anchor="middle" font-family="Liberation Sans" font-weight="bold" font-size="27" fill="#f00" stroke="#f00" stroke-width="0.9">5</text>
<text transform="rotate(-21.35 150 150) translate(150 43) scale(1.000 1)" x="0" y="0" text-anchor="middle" font-family="Liberation Sans" font-weight="bold" font-size="27" fill="#f00" stroke="#f00" stroke-width="0.9">1</text>
<text transform="rotate(-5.32 150 150) translate(150 43) scale(1.000 1)" x="0" y="0" text-anchor="middle" font-family="Liberation Sans" font-weight="bold" font-size="27" fill="#f00" stroke="#f00" stroke-width="0.9">5</text>
<text transform="rotate(10.71 150 150) translate(150 43) scale(1.000 1)" x="0" y="0" text-anchor="middle" font-family="Liberation Sans" font-weight="bold" font-size="27" fill="#f00" stroke="#f00" stroke-width="0.9">y</text>
<text transform="rotate(26.74 150 150) translate(150 43) scale(0.646 1)" x="0" y="0" text-anchor="middle" font-family="Liberation Sans" font-weight="bold" font-size="27" fill="#f00" stroke="#f00" stroke-width="0.9">m</text>
<text transform="rotate(42.77 150 150) translate(150 43) scale(1.000 1)" x="0" y="0" text-anchor="middle" font-family="Liberation Sans" font-weight="bold" font-size="27" fill="#f00" stroke="#f00" stroke-width="0.9">.</text>
<text transform="rotate(58.80 150 150) translate(150 43) scale(1.000 1)" x="0" y="0" text-anchor="middle" font-family="Liberation Sans" font-weight="bold" font-size="27" fill="#f00" stroke="#f00" stroke-width="0.9">c</text>
<text transform="rotate(74.83 150 150) translate(150 43) scale(1.000 1)" x="0" y="0" text-anchor="middle" font-family="Liberation Sans" font-weight="bold" font-size="27" fill="#f00" stroke="#f00" stroke-width="0.9">o</text>
<text transform="rotate(90.86 150 150) translate(150 43) scale(0.646 1)" x="0" y="0" text-anchor="middle" font-family="Liberation Sans" font-weight="bold" font-size="27" fill="#f00" stroke="#f00" stroke-width="0.9">m</text>
<text transform="rotate(27.00 150 150) translate(150 280) scale(1.000 1)" x="0" y="0" text-anchor="middle" font-family="Liberation Sans" font-style="italic" font-size="13" fill="#f00">5</text>
<text transform="rotate(20.45 150 150) translate(150 280) scale(1.000 1)" x="0" y="0" text-anchor="middle" font-family="Liberation Sans" font-style="italic" font-size="13" fill="#f00">1</text>
<text transform="rotate(13.90 150 150) translate(150 280) scale(1.000 1)" x="0" y="0" text-anchor="middle" font-family="Liberation Sans" font-style="italic" font-size="13" fill="#f00">5</text>
<text transform="rotate(7.35 150 150) translate(150 280) scale(1.000 1)" x="0" y="0" text-anchor="middle" font-family="Liberation Sans" font-style="italic" font-size="13" fill="#f00">y</text>
<text transform="rotate(0.80 150 150) translate(150 280) scale(0.692 1)" x="0" y="0" text-anchor="middle" font-family="Liberation Sans" font-style="italic" font-size="13" fill="#f00">m</text>
<text transform="rotate(-5.75 150 150) translate(150 280) scale(1.000 1)" x="0" y="0" text-anchor="middle" font-family="Liberation Sans" font-style="italic" font-size="13" fill="#f00">.</text>
<text transform="rotate(-12.30 150 150) translate(150 280) scale(1.000 1)" x="0" y="0" text-anchor="middle" font-family="Liberation Sans" font-style="italic" font-size="13" fill="#f00">c</text>
<text transform="rotate(-18.85 150 150) translate(150 280) scale(1.000 1)" x="0" y="0" text-anchor="middle" font-family="Liberation Sans" font-style="italic" font-size="13" fill="#f00">o</text>
<text transform="rotate(-25.40 150 150) translate(150 280) scale(0.692 1)" x="0" y="0" text-anchor="middle" font-family="Liberation Sans" font-style="italic" font-size="13" fill="#f00">m</text>
<text x="77" y="162.5" font-family="Liberation Sans" font-size="36" letter-spacing="1.2" fill="#f00" stroke="#f00" stroke-width="0.5">515</text>
<text x="147" y="163" font-family="Liberation Serif" font-weight="500" font-size="38" fill="#f00" stroke="#f00" stroke-width="0.8">源码</text>
<text x="76.5" y="230.5" font-family="Liberation Sans" font-size="28" stroke="#f00" stroke-width="1" fill="#f00" xml:space="preserve">515ym. com</text>
</svg>
</body></html>
